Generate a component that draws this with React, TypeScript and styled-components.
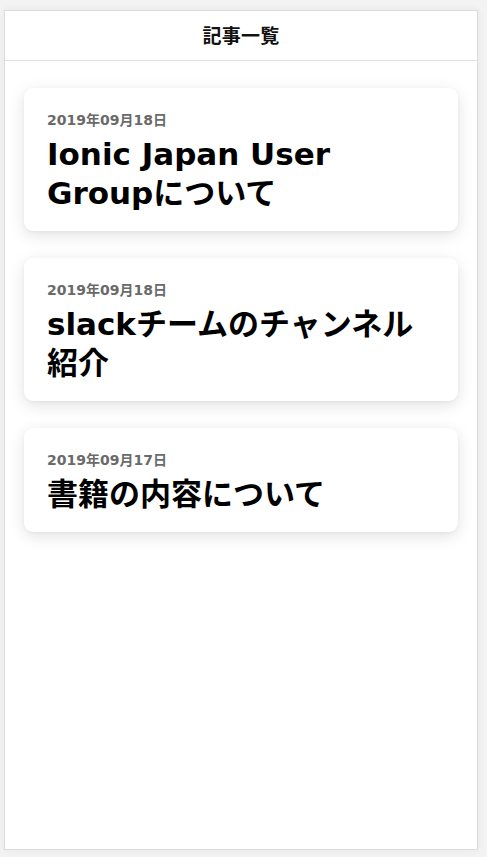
import React from "react";
import styled, { createGlobalStyle } from "styled-components";

const GlobalStyle = createGlobalStyle`
  html, body {
    margin: 0;
    padding: 0;
    background: #f3f3f3;
  }
  body {
    font-family: "DejaVu Sans", "Noto Sans CJK JP", sans-serif;
    -webkit-font-smoothing: antialiased;
  }
`;

const Page = styled.div`
  width: 487px;
  height: 857px;
  box-sizing: border-box;
  padding: 10px 9px 7px 4px;
  background: #f3f3f3;
`;

const Frame = styled.div`
  width: 474px;
  height: 840px;
  box-sizing: border-box;
  border: 1px solid #dcdcdc;
  background: #ffffff;
  box-shadow: 0 0 8px rgba(0, 0, 0, 0.06);
  display: flex;
  flex-direction: column;
`;

const Header = styled.header`
  height: 50px;
  box-sizing: border-box;
  padding-bottom: 3px;
  border-bottom: 1px solid #e2e2e2;
  display: flex;
  align-items: center;
  justify-content: center;
`;

const Title = styled.h1`
  margin: 0;
  font-family: "Noto Sans CJK JP", sans-serif;
  font-size: 19px;
  font-weight: 700;
  color: #111;
  letter-spacing: 0.3px;
`;

const List = styled.main`
  display: flex;
  flex-direction: column;
  gap: 27px;
  padding: 27px 19px;
`;

const Card = styled.article`
  background: #fff;
  border-radius: 9px;
  padding: 22px 23px 18px 23px;
  box-shadow: 0 4px 16px rgba(0, 0, 0, 0.12), 0 1px 3px rgba(0, 0, 0, 0.04);
`;

const DateText = styled.div`
  font-size: 14px;
  line-height: 20px;
  font-weight: 700;
  color: #6a6a6a;
`;

const CardTitle = styled.h2`
  margin: 5px 0 0 0;
  font-size: 31px;
  line-height: 39px;
  font-weight: 700;
  color: #000;
`;

const articles = [
  { date: "2019年09月18日", title: "Ionic Japan User Groupについて" },
  { date: "2019年09月18日", title: "slackチームのチャンネル紹介" },
  { date: "2019年09月17日", title: "書籍の内容について" },
];

export default function App() {
  return (
    <>
      <GlobalStyle />
      <Page>
        <Frame>
          <Header>
            <Title>記事一覧</Title>
          </Header>
          <List>
            {articles.map((a, i) => (
              <Card key={i}>
                <DateText>{a.date}</DateText>
                <CardTitle>{a.title}</CardTitle>
              </Card>
            ))}
          </List>
        </Frame>
      </Page>
    </>
  );
}
